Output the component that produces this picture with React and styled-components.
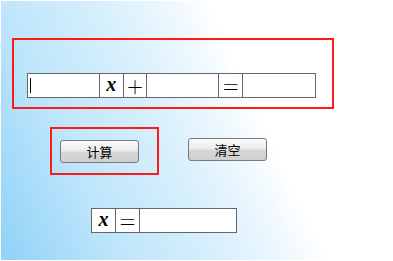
import styled, { createGlobalStyle } from 'styled-components';

const GlobalStyle = createGlobalStyle`
  html, body {
    margin: 0;
    padding: 0;
    background: #ffffff;
  }
`;

export default function App() {
  return (
    <>
      <GlobalStyle />
      <Page>
        <EquationBox>
          <EquationRow>
            <NumberInput $caret />
            <SymbolCell $italic>x</SymbolCell>
            <SymbolCell>＋</SymbolCell>
            <NumberInput />
            <SymbolCell>＝</SymbolCell>
            <NumberInput />
          </EquationRow>
        </EquationBox>

        <ButtonRow>
          <ButtonBox>
            <PlainButton>计算</PlainButton>
          </ButtonBox>
          <ClearButton>清空</ClearButton>
        </ButtonRow>

        <ResultRow>
          <SymbolCell $italic>x</SymbolCell>
          <SymbolCell>＝</SymbolCell>
          <ResultInput readOnly />
        </ResultRow>
      </Page>
    </>
  );
}

const Page = styled.div`
  width: 391px;
  height: 259px;
  margin: 1px;
  box-sizing: border-box;
  padding: 37px 0 0 11px;
  display: flex;
  flex-direction: column;
  align-items: flex-start;
  background: linear-gradient(65deg, #90d2f8 0%, #bfe6fb 24%, #d6effc 42%, #eef8fe 56%, #ffffff 64%);
  font-family: "Noto Sans CJK SC", "Liberation Sans", sans-serif;
`;

const EquationBox = styled.div`
  width: 322px;
  height: 71px;
  box-sizing: border-box;
  border: 2px solid #ff1a1a;
  padding: 33px 0 0 13px;
`;

const EquationRow = styled.div`
  display: flex;
  height: 25px;
  border: 1px solid #666666;
  box-sizing: border-box;
  width: 289px;
  background: #ffffff;
`;

const NumberInput = styled.input`
  width: 72px;
  height: 100%;
  box-sizing: border-box;
  border: none;
  border-right: 1px solid #666666;
  outline: none;
  padding: 0 2px;
  margin: 0;
  font-size: 14px;
  font-family: "Liberation Sans", sans-serif;
  background-color: #ffffff;
  background-image: ${p =>
    p.$caret ? 'linear-gradient(90deg, transparent 1px, #000000 1px, #000000 2px, transparent 2px)' : 'none'};
  background-size: 3px 15px;
  background-position: 1px 4px;
  background-repeat: no-repeat;

  &:last-child {
    border-right: none;
    flex: 1;
  }
`;

const ResultInput = styled(NumberInput)`
  flex: 1;
`;

const SymbolCell = styled.div`
  width: 24px;
  height: 100%;
  box-sizing: border-box;
  border-right: 1px solid #666666;
  display: flex;
  align-items: center;
  justify-content: center;
  font-family: ${p => (p.$italic ? '"Liberation Serif", serif' : '"Noto Sans CJK SC", sans-serif')};
  font-style: ${p => (p.$italic ? 'italic' : 'normal')};
  font-weight: ${p => (p.$italic ? 700 : 300)};
  font-size: ${p => (p.$italic ? '20px' : '18px')};
  color: #000000;
  line-height: 1;
  padding-bottom: ${p => (p.$italic ? '3px' : '0')};
  background: #ffffff;
`;

const ButtonRow = styled.div`
  display: flex;
  align-items: flex-start;
  margin-top: 18px;
  margin-left: 38px;
  gap: 29px;
`;

const ButtonBox = styled.div`
  width: 109px;
  height: 48px;
  box-sizing: border-box;
  border: 2px solid #ff1a1a;
  padding: 9px 0 0 8px;
`;

const PlainButton = styled.button`
  width: 79px;
  height: 23px;
  margin: 0;
  padding: 0;
  border: 1px solid #7a7a7a;
  border-radius: 3px;
  background: linear-gradient(#fbfbfb 0%, #ececec 45%, #d6d6d6 55%, #cfcfcf 100%);
  font-family: "Noto Sans CJK SC", sans-serif;
  font-size: 13px;
  color: #000000;
  line-height: 1;
`;

const ClearButton = styled(PlainButton)`
  margin-top: 11px;
`;

const ResultRow = styled.div`
  display: flex;
  height: 25px;
  width: 146px;
  border: 1px solid #666666;
  box-sizing: border-box;
  margin-top: 33px;
  margin-left: 79px;
  background: #ffffff;
`;
